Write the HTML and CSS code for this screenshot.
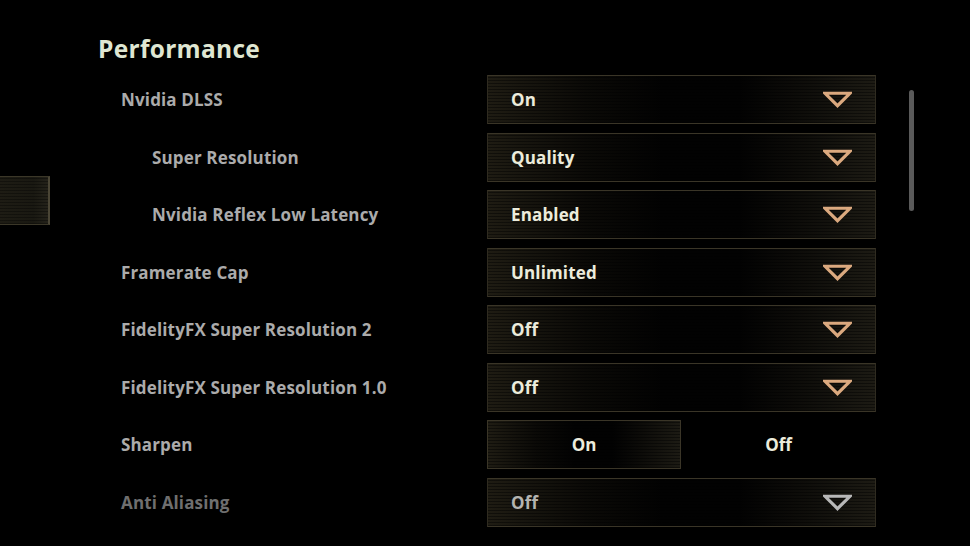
FILE: index.html
```html
<!DOCTYPE html>
<html>
<head>
<meta charset="utf-8">
<link rel="stylesheet" href="styles.css">
</head>
<body>
<div class="screen">
  <aside class="sidebar"><div class="tab"></div></aside>
  <main class="content">
    <h1 class="title">Performance</h1>
    <div class="rows">
      <div class="row">
        <div class="label">Nvidia DLSS</div>
        <div class="select"><span class="value">On</span><svg class="arrow" viewBox="0 0 28 16"><polygon points="2,2 26,2 14,14"/></svg></div>
      </div>
      <div class="row">
        <div class="label sub">Super Resolution</div>
        <div class="select"><span class="value">Quality</span><svg class="arrow" viewBox="0 0 28 16"><polygon points="2,2 26,2 14,14"/></svg></div>
      </div>
      <div class="row">
        <div class="label sub">Nvidia Reflex Low Latency</div>
        <div class="select"><span class="value">Enabled</span><svg class="arrow" viewBox="0 0 28 16"><polygon points="2,2 26,2 14,14"/></svg></div>
      </div>
      <div class="row">
        <div class="label">Framerate Cap</div>
        <div class="select"><span class="value">Unlimited</span><svg class="arrow" viewBox="0 0 28 16"><polygon points="2,2 26,2 14,14"/></svg></div>
      </div>
      <div class="row">
        <div class="label">FidelityFX Super Resolution 2</div>
        <div class="select"><span class="value">Off</span><svg class="arrow" viewBox="0 0 28 16"><polygon points="2,2 26,2 14,14"/></svg></div>
      </div>
      <div class="row">
        <div class="label">FidelityFX Super Resolution 1.0</div>
        <div class="select"><span class="value">Off</span><svg class="arrow" viewBox="0 0 28 16"><polygon points="2,2 26,2 14,14"/></svg></div>
      </div>
      <div class="row">
        <div class="label">Sharpen</div>
        <div class="toggle">
          <div class="opt active">On</div>
          <div class="opt">Off</div>
        </div>
      </div>
      <div class="row disabled">
        <div class="label">Anti Aliasing</div>
        <div class="select"><span class="value">Off</span><svg class="arrow" viewBox="0 0 28 16"><polygon points="2,2 26,2 14,14"/></svg></div>
      </div>
    </div>
  </main>
  <div class="scroll"><div class="thumb"></div></div>
</div>
</body>
</html>
```
FILE: styles.css
```css
* { box-sizing: border-box; }
html, body { margin: 0; padding: 0; background: #000; }
body { width: 970px; height: 546px; overflow: hidden; font-family: "Open Sans", Lato, sans-serif; }
.screen { display: flex; width: 970px; height: 546px; }
.sidebar { width: 50px; flex: none; padding-top: 176px; }
.tab {
  height: 49px;
  border: 1px solid #3b3728;
  border-left: none;
  border-right: 2px solid #4a4535;
  background:
    repeating-linear-gradient(0deg, rgba(0,0,0,0.35) 0 1px, transparent 1px 3px),
    linear-gradient(90deg, #1e1c14, #1a1912 70%, #24221a);
}
.content { width: 826px; flex: none; padding-left: 48px; padding-top: 34px; }
.title {
  margin: 0 0 11px 0;
  font-size: 24.5px;
  line-height: 30px;
  font-weight: 700;
  color: #dfe6d2;
  letter-spacing: 0.3px;
}
.rows { display: flex; flex-direction: column; gap: 8.5px; }
.row { display: flex; align-items: center; height: 49px; }
.label {
  width: 389px;
  padding-left: 23px;
  font-size: 17px;
  font-weight: 700;
  letter-spacing: 0.15px;
  color: #ababab;
}
.label.sub { padding-left: 54px; }
.select, .toggle { width: 389px; height: 49px; }
.select {
  display: flex;
  align-items: center;
  justify-content: space-between;
  padding: 0 23px 0 23px;
  border: 1px solid #2f2b20;
  border-top-color: #3a3527;
  border-bottom-color: #3a3527;
  background:
    repeating-linear-gradient(0deg, rgba(0,0,0,0.45) 0 1px, transparent 1px 3px),
    linear-gradient(90deg, #1f1c13 0%, #0b0a07 25%, #020202 45%, #020202 65%, #0d0c09 80%, #1d1b14 100%);
}
.value { font-size: 17px; font-weight: 700; letter-spacing: 0.15px; color: #ececdc; }
.arrow { width: 29px; height: 17px; }
.arrow polygon { fill: none; stroke: #dba97f; stroke-width: 3; stroke-linejoin: miter; }
.toggle { display: flex; }
.opt {
  flex: 1;
  display: flex;
  align-items: center;
  justify-content: center;
  font-size: 17px;
  font-weight: 700;
  color: #ececdc;
}
.opt.active {
  flex: none;
  width: 194px;
  border: 1px solid #3a3527;
  background:
    repeating-linear-gradient(0deg, rgba(0,0,0,0.45) 0 1px, transparent 1px 3px),
    linear-gradient(90deg, #1f1c13 0%, #0b0a07 25%, #020202 45%, #020202 65%, #0d0c09 80%, #1d1b14 100%);
}
.disabled .label { color: #6f6f6f; }
.disabled .value { color: #b4b4b0; }
.disabled .arrow polygon { stroke: #b8b8b8; }
.scroll { width: 94px; flex: none; padding-top: 90px; padding-left: 33px; }
.thumb { width: 5px; height: 121px; border-radius: 3px; background: #5a5a5a; }
```
